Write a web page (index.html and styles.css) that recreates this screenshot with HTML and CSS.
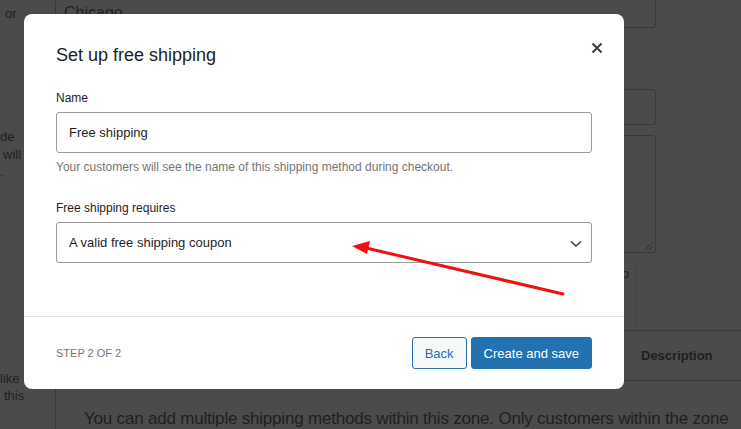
FILE: index.html
```html
<!DOCTYPE html>
<html lang="en">
<head>
    <meta charset="UTF-8">
    <meta name="viewport" content="width=device-width, initial-scale=1.0">
    <title>Set up free shipping</title>
    <link rel="stylesheet" href="styles.css">
</head>
<body>
    <!-- Página de fondo (atenuada por el modal) -->
    <div class="page">
        <div class="side">
            <div class="side-line l1">or</div>
            <div class="side-line l2">de</div>
            <div class="side-line l3">will</div>
            <div class="side-line l4">.</div>
            <div class="side-line l5">like</div>
            <div class="side-line l6">this</div>
        </div>
        <div class="main">
            <div class="bg-field bg-city">Chicago</div>
            <div class="bg-field bg-input"></div>
            <div class="bg-field bg-textarea">
                <span class="resize"></span>
            </div>
            <div class="hint-row">
                <div class="hint">Leave blank to</div>
                <div class="hint-box"></div>
            </div>
            <div class="table-head">
                <div class="th-spacer"></div>
                <div class="th">Description</div>
            </div>
            <p class="zone-text">You can add multiple shipping methods within this zone. Only customers within the zone</p>
        </div>
    </div>

    <!-- Modal -->
    <div class="modal">
        <div class="modal-head">
            <h2 class="modal-title">Set up free shipping</h2>
            <button class="close-button" aria-label="Close">
                <svg width="12" height="12" viewBox="0 0 12 12">
                    <path d="M1.5 1.5 L10.5 10.5 M10.5 1.5 L1.5 10.5" stroke="#3c3c3c" stroke-width="2" fill="none"/>
                </svg>
            </button>
        </div>

        <div class="modal-body">
            <label class="field-label name-label">Name</label>
            <div class="text-input">Free shipping</div>
            <p class="help">Your customers will see the name of this shipping method during checkout.</p>

            <label class="field-label requires-label">Free shipping requires</label>
            <div class="select-input">
                <span>A valid free shipping coupon</span>
                <svg class="chevron" width="12" height="8" viewBox="0 0 12 8">
                    <path d="M1 1.5 L6 6 L11 1.5" stroke="#3c3c3c" stroke-width="1.6" fill="none"/>
                </svg>
            </div>
        </div>

        <div class="modal-foot">
            <span class="step">Step 2 of 2</span>
            <div class="actions">
                <button class="btn btn-secondary">Back</button>
                <button class="btn btn-primary">Create and save</button>
            </div>
        </div>

        <!-- Flecha roja de anotación -->
        <svg class="arrow" width="600" height="375" viewBox="0 0 600 375">
            <line x1="539" y1="280" x2="342" y2="234" stroke="#f01010" stroke-width="3" stroke-linecap="round"/>
            <polygon points="328,232 346,227 343,240" fill="#f01010"/>
        </svg>
    </div>
</body>
</html>
```

FILE: styles.css
```css
* {
    box-sizing: border-box;
}
body {
    margin: 0;
    background-color: #4b4b4b;
    font-family: 'Liberation Sans', Arial, sans-serif;
    overflow: hidden;
}

/* Fondo atenuado */
.page {
    display: flex;
    height: 429px;
    overflow: hidden;
    color: #1f1f1f;
}
.side {
    width: 56px;
    flex-shrink: 0;
    border-right: 1px solid #393939;
    font-size: 13px;
    line-height: 17px;
}
.side-line {
    white-space: nowrap;
}
.l1 { margin: 5px 0 0 5px; }
.l2 { margin: 106px 0 0 0; }
.l3 { margin: 1px 0 0 3px; }
.l4 { margin: 0 0 0 0; }
.l5 { margin: 190px 0 0 0; }
.l6 { margin: 0 0 0 4px; }

.main {
    flex: 1;
    min-width: 0;
}
.bg-field {
    width: 600px;
    border: 1px solid #393939;
    border-left: none;
    border-radius: 0 4px 4px 0;
}
.bg-city {
    margin-top: -12px;
    height: 40px;
    padding: 14px 0 0 8px;
    font-size: 16px;
    line-height: 20px;
}
.bg-input {
    margin-top: 61px;
    height: 36px;
}
.bg-textarea {
    margin-top: 10px;
    height: 118px;
    position: relative;
}
.resize {
    position: absolute;
    right: 2px;
    bottom: 2px;
    width: 8px;
    height: 8px;
    background: linear-gradient(135deg, transparent 45%, #2a2a2a 45%, #2a2a2a 55%, transparent 55%, transparent 70%, #2a2a2a 70%, #2a2a2a 80%, transparent 80%);
}
.hint-row {
    display: flex;
    height: 77px;
}
.hint {
    width: 573px;
    text-align: right;
    font-size: 13px;
    line-height: 20px;
    margin-top: 11px;
    white-space: nowrap;
}
.hint-box {
    margin: 14px 0 0 7px;
    flex: 1;
    border-left: 1px solid #444;
}
.table-head {
    display: flex;
    align-items: center;
    height: 51px;
    border-top: 1px solid #3a3a3a;
    border-bottom: 1px solid #3a3a3a;
}
.th-spacer {
    width: 585px;
}
.th {
    font-weight: bold;
    font-size: 13px;
    white-space: nowrap;
}
.zone-text {
    margin: 27px 0 0 28px;
    font-size: 17px;
    line-height: 22px;
    white-space: nowrap;
    color: #202020;
    letter-spacing: -0.2px;
}

/* Modal */
.modal {
    position: absolute;
    left: 24px;
    top: 14px;
    width: 600px;
    height: 375px;
    background-color: #fff;
    border-radius: 8px;
    display: flex;
    flex-direction: column;
    color: #1e1e1e;
}
.modal-head {
    display: flex;
    justify-content: space-between;
    align-items: flex-start;
    padding: 27px 32px 0;
}
.modal-title {
    margin: 0;
    font-size: 18px;
    font-weight: normal;
    line-height: 28px;
}
.close-button {
    width: 24px;
    height: 24px;
    margin: -5px -17px 0 0;
    padding: 0;
    border: none;
    background: transparent;
    display: flex;
    align-items: center;
    justify-content: center;
    cursor: pointer;
}
.modal-body {
    flex: 1;
    padding: 0 32px;
}
.field-label {
    display: block;
    font-size: 12px;
    line-height: 18px;
}
.name-label {
    margin-top: 20px;
    margin-bottom: 5px;
}
.requires-label {
    margin-top: 24px;
    margin-bottom: 5px;
}
.text-input,
.select-input {
    height: 41px;
    border: 1px solid #9a9a9a;
    border-radius: 3px;
    padding: 0 12px;
    font-size: 13px;
    display: flex;
    align-items: center;
}
.select-input {
    justify-content: space-between;
}
.chevron {
    margin-right: -3px;
    margin-top: 2px;
}
.help {
    margin: 6px 0 0;
    font-size: 12px;
    line-height: 16px;
    color: #757575;
}
.modal-foot {
    height: 73px;
    border-top: 1px solid #e4e4e4;
    padding: 0 32px;
    display: flex;
    align-items: center;
    justify-content: space-between;
}
.step {
    font-size: 11px;
    text-transform: uppercase;
    color: #757575;
}
.actions {
    display: flex;
    gap: 4px;
}
.btn {
    height: 32px;
    padding: 0 12px;
    font-family: 'Liberation Sans', Arial, sans-serif;
    font-size: 13px;
    border-radius: 3px;
    cursor: pointer;
}
.btn-secondary {
    background-color: #f6f7f7;
    border: 1px solid #2271b1;
    color: #2271b1;
}
.btn-primary {
    background-color: #2271b1;
    border: 1px solid #2271b1;
    color: #fff;
}
.arrow {
    position: absolute;
    left: 0;
    top: 0;
    pointer-events: none;
}
```
